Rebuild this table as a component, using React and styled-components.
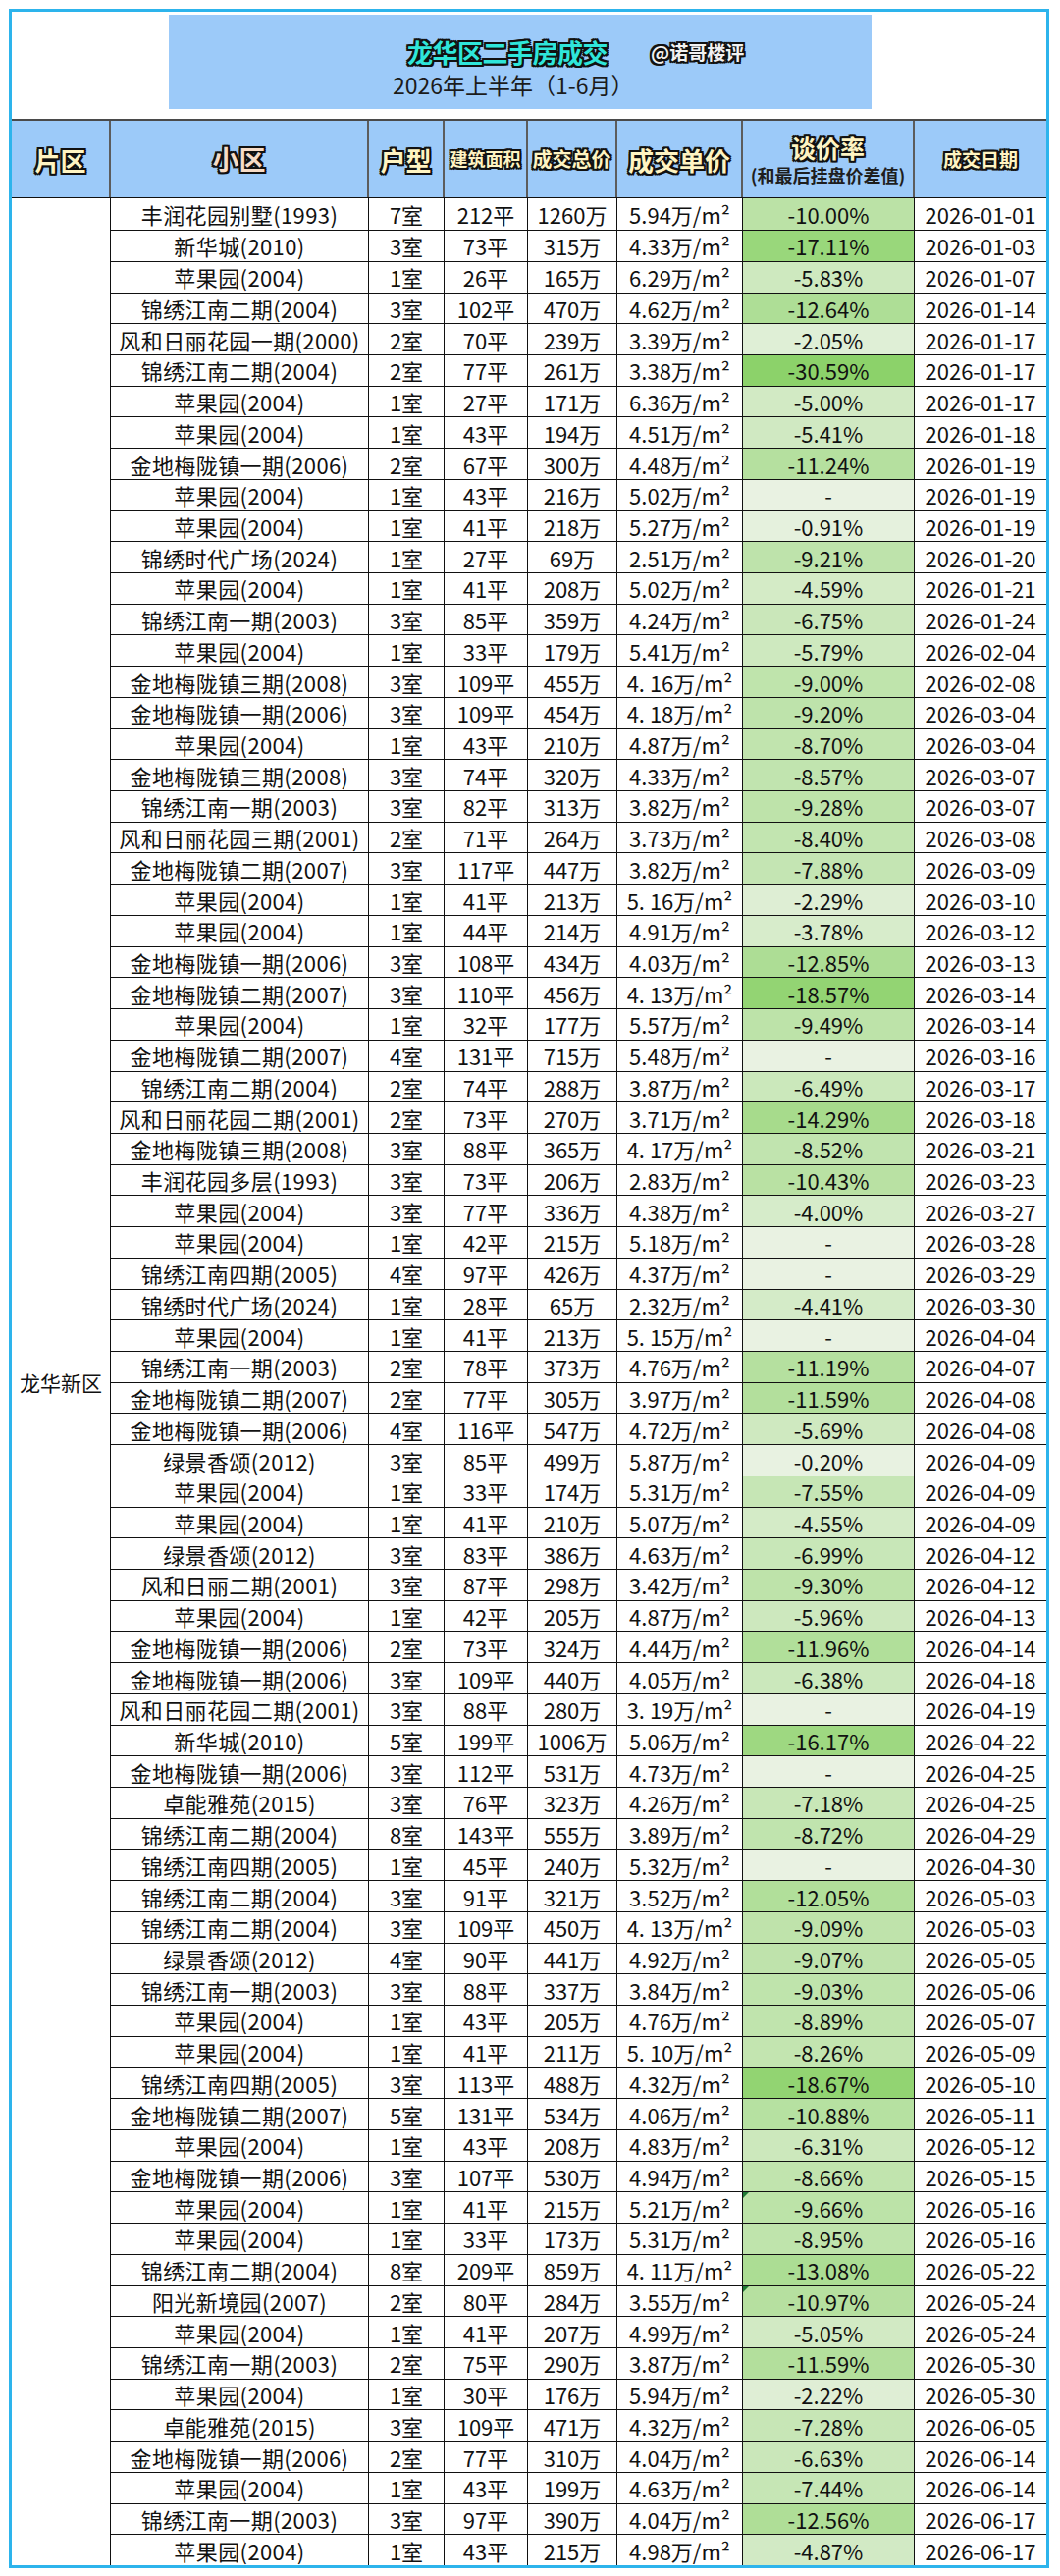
import React from 'react';
import styled, { createGlobalStyle, css } from 'styled-components';

// 列宽照原表量出来的
const COLS = '101px 263px 77px 85px 91px 128px 175px 134px';
const ROW_H = 31.72;

const RAW = `丰润花园别墅(1993)|7|212|1260|5.94|-10.00|01-01
新华城(2010)|3|73|315|4.33|-17.11|01-03
苹果园(2004)|1|26|165|6.29|-5.83|01-07
锦绣江南二期(2004)|3|102|470|4.62|-12.64|01-14
风和日丽花园一期(2000)|2|70|239|3.39|-2.05|01-17
锦绣江南二期(2004)|2|77|261|3.38|-30.59|01-17
苹果园(2004)|1|27|171|6.36|-5.00|01-17
苹果园(2004)|1|43|194|4.51|-5.41|01-18
金地梅陇镇一期(2006)|2|67|300|4.48|-11.24|01-19
苹果园(2004)|1|43|216|5.02||01-19
苹果园(2004)|1|41|218|5.27|-0.91|01-19
锦绣时代广场(2024)|1|27|69|2.51|-9.21|01-20
苹果园(2004)|1|41|208|5.02|-4.59|01-21
锦绣江南一期(2003)|3|85|359|4.24|-6.75|01-24
苹果园(2004)|1|33|179|5.41|-5.79|02-04
金地梅陇镇三期(2008)|3|109|455|4. 16|-9.00|02-08
金地梅陇镇一期(2006)|3|109|454|4. 18|-9.20|03-04
苹果园(2004)|1|43|210|4.87|-8.70|03-04
金地梅陇镇三期(2008)|3|74|320|4.33|-8.57|03-07
锦绣江南一期(2003)|3|82|313|3.82|-9.28|03-07
风和日丽花园三期(2001)|2|71|264|3.73|-8.40|03-08
金地梅陇镇二期(2007)|3|117|447|3.82|-7.88|03-09
苹果园(2004)|1|41|213|5. 16|-2.29|03-10
苹果园(2004)|1|44|214|4.91|-3.78|03-12
金地梅陇镇一期(2006)|3|108|434|4.03|-12.85|03-13
金地梅陇镇二期(2007)|3|110|456|4. 13|-18.57|03-14
苹果园(2004)|1|32|177|5.57|-9.49|03-14
金地梅陇镇二期(2007)|4|131|715|5.48||03-16
锦绣江南二期(2004)|2|74|288|3.87|-6.49|03-17
风和日丽花园二期(2001)|2|73|270|3.71|-14.29|03-18
金地梅陇镇三期(2008)|3|88|365|4. 17|-8.52|03-21
丰润花园多层(1993)|3|73|206|2.83|-10.43|03-23
苹果园(2004)|3|77|336|4.38|-4.00|03-27
苹果园(2004)|1|42|215|5.18||03-28
锦绣江南四期(2005)|4|97|426|4.37||03-29
锦绣时代广场(2024)|1|28|65|2.32|-4.41|03-30
苹果园(2004)|1|41|213|5. 15||04-04
锦绣江南一期(2003)|2|78|373|4.76|-11.19|04-07
金地梅陇镇二期(2007)|2|77|305|3.97|-11.59|04-08
金地梅陇镇一期(2006)|4|116|547|4.72|-5.69|04-08
绿景香颂(2012)|3|85|499|5.87|-0.20|04-09
苹果园(2004)|1|33|174|5.31|-7.55|04-09
苹果园(2004)|1|41|210|5.07|-4.55|04-09
绿景香颂(2012)|3|83|386|4.63|-6.99|04-12
风和日丽二期(2001)|3|87|298|3.42|-9.30|04-12
苹果园(2004)|1|42|205|4.87|-5.96|04-13
金地梅陇镇一期(2006)|2|73|324|4.44|-11.96|04-14
金地梅陇镇一期(2006)|3|109|440|4.05|-6.38|04-18
风和日丽花园二期(2001)|3|88|280|3. 19||04-19
新华城(2010)|5|199|1006|5.06|-16.17|04-22
金地梅陇镇一期(2006)|3|112|531|4.73||04-25
卓能雅苑(2015)|3|76|323|4.26|-7.18|04-25
锦绣江南二期(2004)|8|143|555|3.89|-8.72|04-29
锦绣江南四期(2005)|1|45|240|5.32||04-30
锦绣江南二期(2004)|3|91|321|3.52|-12.05|05-03
锦绣江南二期(2004)|3|109|450|4. 13|-9.09|05-03
绿景香颂(2012)|4|90|441|4.92|-9.07|05-05
锦绣江南一期(2003)|3|88|337|3.84|-9.03|05-06
苹果园(2004)|1|43|205|4.76|-8.89|05-07
苹果园(2004)|1|41|211|5. 10|-8.26|05-09
锦绣江南四期(2005)|3|113|488|4.32|-18.67|05-10
金地梅陇镇二期(2007)|5|131|534|4.06|-10.88|05-11
苹果园(2004)|1|43|208|4.83|-6.31|05-12
金地梅陇镇一期(2006)|3|107|530|4.94|-8.66|05-15
苹果园(2004)|1|41|215|5.21|-9.66!|05-16
苹果园(2004)|1|33|173|5.31|-8.95|05-16
锦绣江南二期(2004)|8|209|859|4. 11|-13.08|05-22
阳光新境园(2007)|2|80|284|3.55|-10.97!|05-24
苹果园(2004)|1|41|207|4.99|-5.05|05-24
锦绣江南一期(2003)|2|75|290|3.87|-11.59|05-30
苹果园(2004)|1|30|176|5.94|-2.22|05-30
卓能雅苑(2015)|3|109|471|4.32|-7.28|06-05
金地梅陇镇一期(2006)|2|77|310|4.04|-6.63|06-14
苹果园(2004)|1|43|199|4.63|-7.44|06-14
锦绣江南一期(2003)|3|97|390|4.04|-12.56|06-17
苹果园(2004)|1|43|215|4.98|-4.87|06-17`;

const deals = RAW.split('\n').map((line) => {
  const [name, room, area, total, unit, rate, date] = line.split('|');
  return {
    name,
    room,
    area,
    total,
    unit,
    rate: rate.replace('!', ''),
    flag: rate.endsWith('!'),
    date: `2026-${date}`,
  };
});

// 谈价率色阶：浅绿 -> 深绿，20% 封顶
const rateColor = (rate) => {
  const t = rate ? Math.min(Math.abs(parseFloat(rate)), 20) / 20 : 0;
  const mix = (a, b) => Math.round(a + (b - a) * t);
  return `rgb(${mix(233, 140)}, ${mix(242, 210)}, ${mix(226, 106)})`;
};

const outline = (w, c = '#111') =>
  [
    [w, 0],
    [-w, 0],
    [0, w],
    [0, -w],
    [w, w],
    [-w, -w],
    [w, -w],
    [-w, w],
  ]
    .map(([x, y]) => `${x}px ${y}px 0 ${c}`)
    .join(', ');

const GlobalStyle = createGlobalStyle`
  * { box-sizing: border-box; }
  body {
    margin: 0;
    background: #fff;
    font-family: "Noto Sans CJK SC", "Noto Sans", sans-serif;
    color: #111;
  }
`;

const Sheet = styled.div`
  margin: 9px 0 0 9px;
  width: 1060px;
  border: 3px solid #2db4ec;
  background: #fff;
`;

const TitleArea = styled.div`
  height: 109px;
  padding: 3px 0 0 160px;
`;

const TitleBox = styled.div`
  width: 716px;
  height: 96px;
  background: #9ccaf9;
  padding: 20px 0 0 228px;
  display: flex;
  flex-direction: column;
`;

const TitleRow = styled.div`
  display: flex;
  align-items: center;
  gap: 44px;
  margin-left: 15px;
  height: 34px;
`;

const Title = styled.span`
  font-size: 26px;
  font-weight: 700;
  color: #2fe6da;
  letter-spacing: -0.5px;
  text-shadow: ${outline(2)};
`;

const Handle = styled.span`
  font-size: 19px;
  font-weight: 700;
  color: #f2f2f2;
  text-shadow: ${outline(2)};
`;

const SubTitle = styled.div`
  margin-top: 1px;
  font-size: 23px;
  line-height: 32px;
  color: #1b1b1b;
`;

const Header = styled.div`
  display: grid;
  grid-template-columns: ${COLS};
  height: 81.4px;
  background: #9ccaf9;
  border-top: 2px solid #4a4a4a;
  border-bottom: 1px solid #111;
`;

const HeadCell = styled.div`
  display: flex;
  flex-direction: column;
  align-items: center;
  justify-content: center;
  border-right: ${(p) => (p.$edge ? 'none' : '2px solid #5c5c5c')};
  white-space: nowrap;
`;

const HeadLabel = styled.span`
  font-size: ${(p) => p.$size}px;
  line-height: 1.2;
  font-weight: 700;
  color: ${(p) => p.$tint || '#fff4c2'};
  text-shadow: ${outline(2)};
`;

const HeadNote = styled.span`
  margin-top: 4px;
  font-size: 18px;
  line-height: 1.1;
  font-weight: 700;
  color: #1e1e1e;
`;

const Body = styled.div`
  display: grid;
  grid-template-columns: ${COLS};
  grid-auto-rows: ${ROW_H}px;
`;

const Region = styled.div`
  grid-column: 1;
  grid-row: 1 / span ${(p) => p.$span};
  display: flex;
  align-items: center;
  justify-content: center;
  font-size: 21px;
  border-right: 1px solid #111;
`;

const Cell = styled.div`
  position: relative;
  display: flex;
  align-items: center;
  justify-content: center;
  font-size: 22px;
  letter-spacing: ${(p) => (p.$wide ? '0.4px' : '0')};
  white-space: nowrap;
  background: ${(p) => p.$bg || 'transparent'};
  border-right: ${(p) => (p.$edge ? 'none' : '1px solid #111')};
  border-top: ${(p) => (p.$first ? 'none' : '1px solid #111')};

  ${(p) =>
    p.$flag &&
    css`
      &::before {
        content: '';
        position: absolute;
        left: 0;
        top: 0;
        border-top: 6px solid #1f7a35;
        border-right: 6px solid transparent;
      }
    `}
`;

const heads = [
  { label: '片区', size: 26 },
  { label: '小区', size: 27, tint: '#f7dcc7' },
  { label: '户型', size: 26 },
  { label: '建筑面积', size: 18 },
  { label: '成交总价', size: 20 },
  { label: '成交单价', size: 26 },
  { label: '谈价率', size: 25, note: '(和最后挂盘价差值)' },
  { label: '成交日期', size: 19 },
];

const App = () => {
  return (
    <>
      <GlobalStyle />
      <Sheet>
        <TitleArea>
          <TitleBox>
            <TitleRow>
              <Title>龙华区二手房成交</Title>
              <Handle>@诺哥楼评</Handle>
            </TitleRow>
            <SubTitle>2026年上半年（1-6月）</SubTitle>
          </TitleBox>
        </TitleArea>

        <Header>
          {heads.map((h, i) => (
            <HeadCell key={h.label} $edge={i === heads.length - 1}>
              <HeadLabel $size={h.size} $tint={h.tint}>
                {h.label}
              </HeadLabel>
              {h.note && <HeadNote>{h.note}</HeadNote>}
            </HeadCell>
          ))}
        </Header>

        <Body>
          <Region $span={deals.length}>龙华新区</Region>
          {deals.map((d, i) => {
            const first = i === 0;
            return (
              <React.Fragment key={i}>
                <Cell $first={first} $wide>
                  {d.name}
                </Cell>
                <Cell $first={first}>{d.room}室</Cell>
                <Cell $first={first}>{d.area}平</Cell>
                <Cell $first={first}>{d.total}万</Cell>
                <Cell $first={first}>{d.unit}万/m²</Cell>
                <Cell $first={first} $bg={rateColor(d.rate)} $flag={d.flag}>
                  {d.rate ? `${d.rate}%` : '-'}
                </Cell>
                <Cell $first={first} $edge>
                  {d.date}
                </Cell>
              </React.Fragment>
            );
          })}
        </Body>
      </Sheet>
    </>
  );
};

export default App;
